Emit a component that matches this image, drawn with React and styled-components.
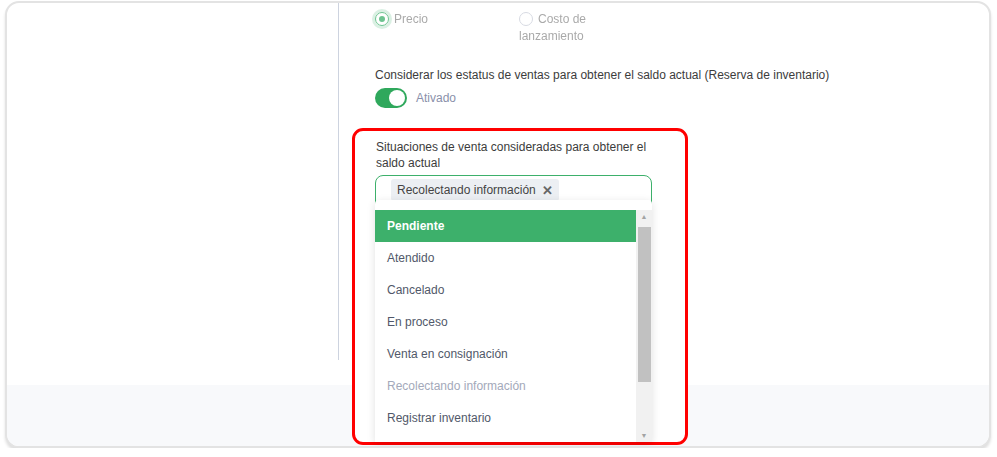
import React from 'react'
import styled, { createGlobalStyle } from 'styled-components'

const GlobalStyle = createGlobalStyle`
    html, body {
        margin:0;
        padding:0;
        background:#fff;
    }
    body {
        font-family:"Liberation Sans", Arial, sans-serif;
    }
`

const Frame = styled.div`
    box-sizing:border-box;
    width:986px;
    height:447px;
    margin:1px 0 0 5px;
    border:2px solid #e3e3e3;
    border-radius:14px;
    box-shadow:0 3px 3px rgba(0,0,0,0.13);
    overflow:hidden;
    display:flex;
    flex-direction:column;
    background:#fff;
`
const Body = styled.div`
    height:382px;
    flex:none;
    display:flex;
    align-items:flex-start;
`
const LeftPane = styled.div`
    width:331px;
    height:357px;
    border-right:1px solid #cdd3df;
    flex:none;
`
const Content = styled.div`
    padding:8px 0 0 36px;
    display:flex;
    flex-direction:column;
    align-items:flex-start;
`
const RadioRow = styled.div`
    display:flex;
    filter:blur(0.6px);
    opacity:0.75;
`
const RadioOption = styled.div`
    width:${p => p.$w}px;
    font-size:12px;
    line-height:17px;
    color:#8d8d8d;
`
const RadioDot = styled.span`
    display:inline-block;
    vertical-align:-3px;
    box-sizing:border-box;
    width:14px;
    height:14px;
    border-radius:50%;
    margin-right:5px;
    border:1px solid ${p => p.$on ? '#3db06b' : '#c9cdd8'};
    box-shadow:${p => p.$on ? '0 0 0 3px rgba(61,176,107,0.25)' : 'none'};
    position:relative;
    &::after {
        content:'';
        display:${p => p.$on ? 'block' : 'none'};
        position:absolute;
        left:3px;
        top:3px;
        width:6px;
        height:6px;
        border-radius:50%;
        background:#3db06b;
    }
`
const FieldLabel = styled.div`
    font-size:12px;
    line-height:16px;
    color:#3c3c3c;
    max-width:${p => p.$w ? p.$w + 'px' : 'none'};
`
const ToggleRow = styled.div`
    display:flex;
    align-items:center;
    gap:9px;
    margin-top:5px;
`
const Toggle = styled.div`
    width:32px;
    height:20px;
    border-radius:10px;
    background:#2fa85c;
    position:relative;
    &::after {
        content:'';
        position:absolute;
        right:2px;
        top:2px;
        width:16px;
        height:16px;
        border-radius:50%;
        background:#fff;
    }
`
const ToggleText = styled.span`
    font-size:12px;
    color:#8a90aa;
`
const Highlight = styled.div`
    position:relative;
    z-index:2;
    box-sizing:border-box;
    width:336px;
    height:317px;
    margin:20px 0 0 -23px;
    border:3px solid #f00;
    border-radius:11px;
    padding:8px 0 0 21px;
    background:#fff;
`
const SelectBox = styled.div`
    position:relative;
    box-sizing:border-box;
    width:277px;
    height:40px;
    margin:4px 0 0 -1px;
    border:1px solid #3db06b;
    border-radius:8px;
    padding:3px 0 0 15px;
`
const Chip = styled.span`
    display:inline-flex;
    align-items:center;
    gap:6px;
    height:22px;
    padding:0 6px;
    border-radius:3px;
    background:#eceff3;
    font-size:12px;
    color:#444;
`
const ChipX = styled.span`
    font-size:13px;
    font-weight:bold;
    color:#666;
`
const Dropdown = styled.div`
    position:absolute;
    left:-1px;
    top:24px;
    width:277px;
    height:242px;
    background:#fff;
    box-shadow:0 2px 8px rgba(0,0,0,0.12);
    display:flex;
    border-radius:4px 4px 0 0;
`
const List = styled.div`
    flex:1;
    padding-top:10px;
`
const Item = styled.div`
    height:32px;
    line-height:32px;
    padding-left:12px;
    font-size:12px;
    color:${p => p.$active ? '#fff' : p.$disabled ? '#a3a9ba' : '#515869'};
    background:${p => p.$active ? '#3db06b' : 'transparent'};
    font-weight:${p => p.$active ? 'bold' : 'normal'};
`
const ScrollBar = styled.div`
    width:16px;
    margin-top:10px;
    background:#f1f1f1;
    display:flex;
    flex-direction:column;
    align-items:center;
`
const Arrow = styled.div`
    height:13px;
    display:flex;
    align-items:center;
    justify-content:center;
    color:#a3a3a3;
    font-size:7px;
`
const Thumb = styled.div`
    width:13px;
    height:155px;
    margin-top:4px;
    background:#c1c1c1;
`
const Spacer = styled.div`
    flex:1;
`
const Footer = styled.div`
    flex:1;
    background:#f8f9fb;
`

const options = [
    { label: 'Pendiente', active: true },
    { label: 'Atendido' },
    { label: 'Cancelado' },
    { label: 'En proceso' },
    { label: 'Venta en consignación' },
    { label: 'Recolectando información', disabled: true },
    { label: 'Registrar inventario' },
]

export default function App() {
    return (
        <>
            <GlobalStyle />
            <Frame>
                <Body>
                    <LeftPane />
                    <Content>
                        <RadioRow>
                            <RadioOption $w={144}><RadioDot $on />Precio</RadioOption>
                            <RadioOption $w={80}><RadioDot />Costo de lanzamiento</RadioOption>
                        </RadioRow>
                        <FieldLabel style={{ marginTop: 22 }}>
                            Considerar los estatus de ventas para obtener el saldo actual (Reserva de inventario)
                        </FieldLabel>
                        <ToggleRow>
                            <Toggle />
                            <ToggleText>Ativado</ToggleText>
                        </ToggleRow>
                        <Highlight>
                            <FieldLabel $w={277}>
                                Situaciones de venta consideradas para obtener el saldo actual
                            </FieldLabel>
                            <SelectBox>
                                <Chip>Recolectando información <ChipX>✕</ChipX></Chip>
                                <Dropdown>
                                    <List>
                                        {options.map(o => (
                                            <Item key={o.label} $active={o.active} $disabled={o.disabled}>{o.label}</Item>
                                        ))}
                                    </List>
                                    <ScrollBar>
                                        <Arrow>▲</Arrow>
                                        <Thumb />
                                        <Spacer />
                                        <Arrow>▼</Arrow>
                                    </ScrollBar>
                                </Dropdown>
                            </SelectBox>
                        </Highlight>
                    </Content>
                </Body>
                <Footer />
            </Frame>
        </>
    )
}
